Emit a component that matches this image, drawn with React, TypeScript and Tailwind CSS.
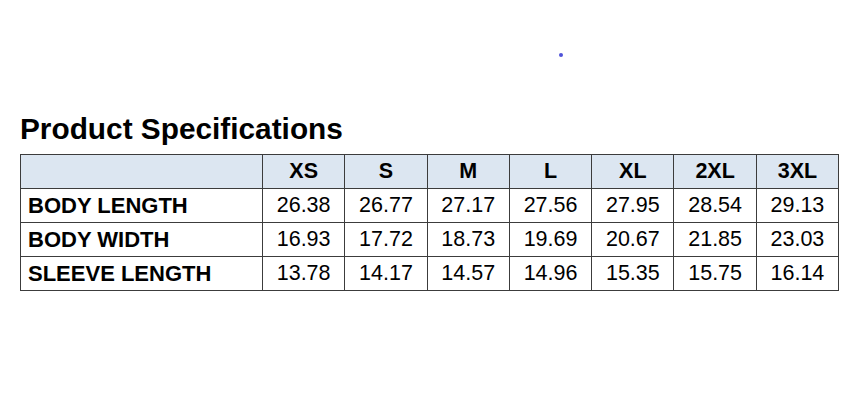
import React from "react";

const sizes = ["XS", "S", "M", "L", "XL", "2XL", "3XL"];
const rows: [string, string[]][] = [
  ["BODY LENGTH", ["26.38", "26.77", "27.17", "27.56", "27.95", "28.54", "29.13"]],
  ["BODY WIDTH", ["16.93", "17.72", "18.73", "19.69", "20.67", "21.85", "23.03"]],
  ["SLEEVE LENGTH", ["13.78", "14.17", "14.57", "14.96", "15.35", "15.75", "16.14"]],
];

export default function App() {
  return (
    <div
      className="relative w-[862px] h-[400px] bg-white text-black overflow-hidden"
      style={{ fontFamily: '"Liberation Sans", Arial, sans-serif' }}
    >
      <div className="absolute left-[559px] top-[53px] w-[4px] h-[4px] rounded-full bg-[#4f52d9]" />
      <div className="pl-[20px] pt-[114px]">
        <h1 className="text-[29.8px] leading-[29px] font-bold">Product Specifications</h1>
        <table className="mt-[11px] border-collapse w-[818px] table-fixed">
          <colgroup>
            <col className="w-[242px]" />
            {sizes.map((s) => (
              <col key={s} className="w-[82.3px]" />
            ))}
          </colgroup>
          <thead>
            <tr className="h-[34px] bg-[#dce6f1]">
              <th className="border-[1.5px] border-[#3c3c3c]" />
              {sizes.map((s) => (
                <th
                  key={s}
                  className="border-[1.5px] border-[#3c3c3c] text-center text-[21.5px] font-bold leading-none p-0"
                >
                  {s}
                </th>
              ))}
            </tr>
          </thead>
          <tbody>
            {rows.map(([label, vals]) => (
              <tr key={label} className="h-[34px]">
                <td className="border-[1.5px] border-[#3c3c3c] pl-[7px] text-left text-[22px] font-bold leading-none">
                  {label}
                </td>
                {vals.map((v, i) => (
                  <td
                    key={i}
                    className="border-[1.5px] border-[#3c3c3c] text-center text-[21.5px] leading-none p-0"
                  >
                    {v}
                  </td>
                ))}
              </tr>
            ))}
          </tbody>
        </table>
      </div>
    </div>
  );
}
